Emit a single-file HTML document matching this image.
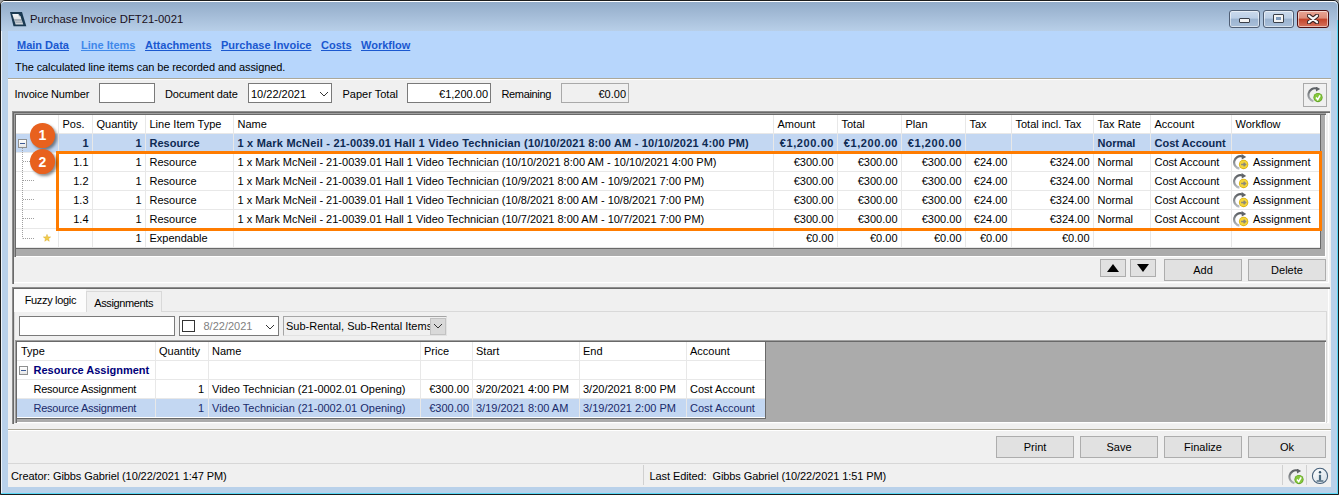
<!DOCTYPE html>
<html><head><meta charset="utf-8">
<style>
*{margin:0;padding:0;box-sizing:border-box}
html,body{width:1339px;height:495px;overflow:hidden;background:#f0f0f0}
body{position:relative;font-family:"Liberation Sans",sans-serif;font-size:11px;color:#000}
.a{position:absolute}
.t{position:absolute;white-space:pre;font-size:11px;line-height:13px}
.b{font-weight:bold}
.wb{position:absolute;top:10px;height:18px;width:31px;border:1px solid #4f5e74;border-radius:3px;background:linear-gradient(#cbdaec 0,#bccfe6 45%,#9bb3d0 50%,#a9bfd9 100%);box-shadow:inset 0 0 0 1px rgba(255,255,255,.55)}
.wb.close{background:linear-gradient(#e8a595 0,#de8c79 45%,#c3432a 50%,#d5735d 100%);border-color:#4e1013}
.box{position:absolute;background:#fff;border:1px solid #7a7a7a}
.btn{position:absolute;background:#e1e1e1;border:1px solid #adadad;text-align:center;line-height:20px;font-size:11px;white-space:pre}
.lnk{text-decoration:underline;color:#1a5ad2}
</style></head><body>
<div class="a" style="left:0px;top:0px;width:1339px;height:495px;background:#a0a0a0"></div>
<div class="a" style="left:0px;top:0px;width:1339px;height:495px;background:#b9d1ea;border:1px solid #1c1c1c;border-radius:5px 5px 0 0"></div>
<div class="a" style="left:1337px;top:20px;width:1px;height:474px;background:#5ad8f6"></div>
<div class="a" style="left:1px;top:493px;width:1337px;height:1px;background:#5ad8f6"></div>
<div class="a" style="left:1px;top:4px;width:1px;height:489px;background:#eef4fa"></div>
<div class="a" style="left:1px;top:1px;width:1336px;height:30px;background:linear-gradient(#93acc9,#b8cfe8);border-radius:4px 4px 0 0;border-top:1px solid #fff"></div>
<svg class="a" style="left:10px;top:12px" width="17" height="15" viewBox="0 0 17 15">
 <defs><linearGradient id="pg" x1="0" y1="0" x2="0" y2="1"><stop offset="0" stop-color="#f4f6f8"/><stop offset=".45" stop-color="#e0e4e8"/><stop offset=".5" stop-color="#aab4bc"/><stop offset="1" stop-color="#d8dde2"/></linearGradient></defs>
 <path d="M0 0 L12 0 L16.3 14.2 L3.5 14.2 Z" fill="#1b3a52"/>
 <path d="M2.2 2 L8.5 2 L10.4 4.2 L13.3 12.5 L5.6 12.5 Z" fill="url(#pg)"/>
 <path d="M8.5 2 L8.9 4.3 L10.4 4.2 Z" fill="#6a8298"/>
 <path d="M4.6 8.2 H11.2 M5.4 10.3 H12.2" stroke="#8e9aa6" stroke-width=".7"/>
</svg>
<div class="t " style="left:30px;top:13.3px;font-size:11.3px;color:#1a1020">Purchase Invoice DFT21-0021</div>
<div class="wb" style="left:1229px"></div><div class="wb" style="left:1263px"></div><div class="wb close" style="left:1297px;width:32px"></div>
<div class="a" style="left:1239px;top:18px;width:11px;height:5px;background:#f4f4f4;border:1px solid #3a3f48;border-radius:1px"></div>
<div class="a" style="left:1273px;top:14px;width:11px;height:9px;background:#f4f4f4;border:1px solid #3a3f48;border-radius:1px"><div class="a" style="left:2px;top:2px;width:5px;height:3px;background:#7f9bbd"></div></div>
<svg class="a" style="left:1306.5px;top:13.5px" width="12" height="10" viewBox="0 0 12 10"><path d="M2 1.8 L10 8.2 M10 1.8 L2 8.2" stroke="#3b2424" stroke-width="4.4" stroke-linecap="round"/><path d="M2 1.8 L10 8.2 M10 1.8 L2 8.2" stroke="#f7f7f7" stroke-width="2.3" stroke-linecap="round"/></svg>
<div class="a" style="left:8px;top:31px;width:1323px;height:456px;background:#f0f0f0"></div>
<div class="a" style="left:8px;top:31px;width:1323px;height:47px;background:#b7d6fc"></div>
<div class="a" style="left:8px;top:78px;width:1323px;height:1px;background:#aca899"></div>
<div class="a" style="left:8px;top:79px;width:1323px;height:1px;background:#fff"></div>
<div class="t b lnk" style="left:17px;top:38.5px;color:#1a58d0">Main Data</div>
<div class="t b lnk" style="left:81px;top:38.5px;color:#3f88ea">Line Items</div>
<div class="t b lnk" style="left:145px;top:38.5px;color:#1a58d0">Attachments</div>
<div class="t b lnk" style="left:221px;top:38.5px;color:#1a58d0">Purchase Invoice</div>
<div class="t b lnk" style="left:321px;top:38.5px;color:#1a58d0">Costs</div>
<div class="t b lnk" style="left:361px;top:38.5px;color:#1a58d0">Workflow</div>
<div class="t " style="left:15px;top:60.9px;letter-spacing:-0.09px">The calculated line items can be recorded and assigned.</div>
<div class="t " style="left:14.5px;top:87.7px;letter-spacing:-0.17px">Invoice Number</div>
<div class="box" style="left:99px;top:83px;width:56px;height:20px"></div>
<div class="t " style="left:165px;top:87.7px;letter-spacing:-0.15px">Document date</div>
<div class="box" style="left:248px;top:83px;width:84px;height:20px"></div>
<div class="t " style="left:251px;top:87.7px;">10/22/2021</div>
<svg class="a" style="left:318.5px;top:91px" width="10" height="6"><path d="M1 1 L5 5 L9 1" stroke="#333" fill="none"/></svg>
<div class="t " style="left:342.5px;top:87.7px;">Paper Total</div>
<div class="box" style="left:407px;top:83px;width:84px;height:20px"></div>
<div class="t " style="left:410px;top:87.7px;width:78px;text-align:right;">€1,200.00</div>
<div class="t " style="left:501.5px;top:87.7px;letter-spacing:-0.35px">Remaining</div>
<div class="box" style="left:561px;top:83px;width:68px;height:20px;background:#f0f0f0;border-color:#a9a9a9"></div>
<div class="t " style="left:564px;top:87.7px;width:62px;text-align:right;">€0.00</div>
<div class="a" style="left:1303px;top:83px;width:24px;height:24px;border:1px solid #a9a9a9;background:#f0f0f0"></div>
<div class="a" style="left:12px;top:111px;width:1318px;height:173px;background:#f0f0f0;box-shadow:inset 1px 1px 0 #8e8e8e,inset 2px 2px 0 #696969,inset -1px -1px 0 #f4f4f4,inset -2px -2px 0 #fff"></div>
<div class="a" style="left:14px;top:113px;width:1312px;height:144px;background:#ababab;box-shadow:inset 1px 1px 0 #a0a0a0,inset 2px 2px 0 #696969,inset -1px -1px 0 #fff"></div>
<div class="a" style="left:16px;top:115px;width:1305px;height:134px;border-right:1px solid #696969;border-bottom:1px solid #696969"></div>
<div class="a" style="left:16px;top:115px;width:1304px;height:133px;background:#fff"></div>
<div class="a" style="left:16px;top:134px;width:1304px;height:18px;background:#c3d7f2"></div>
<div class="a" style="left:16px;top:133px;width:1304px;height:1px;background:#e8e8e8"></div>
<div class="a" style="left:16px;top:152px;width:1304px;height:1px;background:#e8e8e8"></div>
<div class="a" style="left:16px;top:171px;width:1304px;height:1px;background:#e8e8e8"></div>
<div class="a" style="left:16px;top:190px;width:1304px;height:1px;background:#e8e8e8"></div>
<div class="a" style="left:16px;top:209px;width:1304px;height:1px;background:#e8e8e8"></div>
<div class="a" style="left:16px;top:228px;width:1304px;height:1px;background:#e8e8e8"></div>
<div class="a" style="left:16px;top:247px;width:1304px;height:1px;background:#e8e8e8"></div>
<div class="a" style="left:58px;top:115px;width:1px;height:132px;background:#e8e8e8"></div>
<div class="a" style="left:92px;top:115px;width:1px;height:132px;background:#e8e8e8"></div>
<div class="a" style="left:145px;top:115px;width:1px;height:132px;background:#e8e8e8"></div>
<div class="a" style="left:233px;top:115px;width:1px;height:132px;background:#e8e8e8"></div>
<div class="a" style="left:773px;top:115px;width:1px;height:132px;background:#e8e8e8"></div>
<div class="a" style="left:837px;top:115px;width:1px;height:132px;background:#e8e8e8"></div>
<div class="a" style="left:901px;top:115px;width:1px;height:132px;background:#e8e8e8"></div>
<div class="a" style="left:965px;top:115px;width:1px;height:132px;background:#e8e8e8"></div>
<div class="a" style="left:1011px;top:115px;width:1px;height:132px;background:#e8e8e8"></div>
<div class="a" style="left:1093px;top:115px;width:1px;height:132px;background:#e8e8e8"></div>
<div class="a" style="left:1150px;top:115px;width:1px;height:132px;background:#e8e8e8"></div>
<div class="a" style="left:1231px;top:115px;width:1px;height:132px;background:#e8e8e8"></div>
<div class="t " style="left:62.5px;top:117.7px;">Pos.</div>
<div class="t " style="left:96.5px;top:117.7px;">Quantity</div>
<div class="t " style="left:149.5px;top:117.7px;">Line Item Type</div>
<div class="t " style="left:237.5px;top:117.7px;">Name</div>
<div class="t " style="left:777.5px;top:117.7px;">Amount</div>
<div class="t " style="left:841.5px;top:117.7px;">Total</div>
<div class="t " style="left:905.5px;top:117.7px;">Plan</div>
<div class="t " style="left:969.5px;top:117.7px;">Tax</div>
<div class="t " style="left:1015.5px;top:117.7px;">Total incl. Tax</div>
<div class="t " style="left:1097.5px;top:117.7px;">Tax Rate</div>
<div class="t " style="left:1154.5px;top:117.7px;">Account</div>
<div class="t " style="left:1235.5px;top:117.7px;">Workflow</div>
<div class="t b" style="left:58px;top:136.8px;width:30.5px;text-align:right;color:#0e2a52;">1</div>
<div class="t b" style="left:92px;top:136.8px;width:49.5px;text-align:right;color:#0e2a52;">1</div>
<div class="t b" style="left:149.5px;top:136.8px;color:#0e2a52;">Resource</div>
<div class="t b" style="left:237.5px;top:136.8px;color:#0e2a52;letter-spacing:0.2px;">1 x Mark McNeil - 21-0039.01 Hall 1 Video Technician (10/10/2021 8:00 AM - 10/10/2021 4:00 PM)</div>
<div class="t b" style="left:773px;top:136.8px;width:61.1px;text-align:right;color:#0e2a52;letter-spacing:0.6px;">€1,200.00</div>
<div class="t b" style="left:837px;top:136.8px;width:61.1px;text-align:right;color:#0e2a52;letter-spacing:0.6px;">€1,200.00</div>
<div class="t b" style="left:901px;top:136.8px;width:61.1px;text-align:right;color:#0e2a52;letter-spacing:0.6px;">€1,200.00</div>
<div class="t b" style="left:1097.5px;top:136.8px;color:#0e2a52;">Normal</div>
<div class="t b" style="left:1154.5px;top:136.8px;color:#0e2a52;">Cost Account</div>
<div class="t " style="left:58px;top:155.8px;width:30.5px;text-align:right;">1.1</div>
<div class="t " style="left:92px;top:155.8px;width:49.5px;text-align:right;">1</div>
<div class="t " style="left:149.5px;top:155.8px;">Resource</div>
<div class="t " style="left:237.5px;top:155.8px;">1 x Mark McNeil - 21-0039.01 Hall 1 Video Technician (10/10/2021 8:00 AM - 10/10/2021 4:00 PM)</div>
<div class="t " style="left:773px;top:155.8px;width:60.5px;text-align:right;">€300.00</div>
<div class="t " style="left:837px;top:155.8px;width:60.5px;text-align:right;">€300.00</div>
<div class="t " style="left:901px;top:155.8px;width:60.5px;text-align:right;">€300.00</div>
<div class="t " style="left:965px;top:155.8px;width:42.5px;text-align:right;">€24.00</div>
<div class="t " style="left:1011px;top:155.8px;width:78.5px;text-align:right;">€324.00</div>
<div class="t " style="left:1097.5px;top:155.8px;">Normal</div>
<div class="t " style="left:1154.5px;top:155.8px;">Cost Account</div>
<svg class="a" style="left:1233px;top:154px" width="16" height="16" viewBox="0 0 16 16">
<defs><linearGradient id="ag1233154" x1="0" y1="0" x2="0" y2="1"><stop offset="0" stop-color="#5c6064"/><stop offset="1" stop-color="#b8bcc0"/></linearGradient></defs>
<path d="M6.4 14.7 A6.3 6.3 0 1 1 9.4 2.5" stroke="url(#ag1233154)" stroke-width="2.2" fill="none"/>
<path d="M8.6 0 L13.2 2.9 L8.8 5.6 Z" fill="#606468"/>
<circle cx="10.6" cy="10.5" r="4.7" fill="#d8b010"/>
<circle cx="10.6" cy="10.3" r="3.9" fill="#f4d53a"/>
<path d="M8.1 10.5 L12.3 10.5 M10.6 8.7 L12.6 10.5 L10.6 12.3" stroke="#8c8a7a" stroke-width="1.4" fill="none"/>
</svg>
<div class="t " style="left:1253px;top:155.8px;">Assignment</div>
<div class="t " style="left:58px;top:174.8px;width:30.5px;text-align:right;">1.2</div>
<div class="t " style="left:92px;top:174.8px;width:49.5px;text-align:right;">1</div>
<div class="t " style="left:149.5px;top:174.8px;">Resource</div>
<div class="t " style="left:237.5px;top:174.8px;">1 x Mark McNeil - 21-0039.01 Hall 1 Video Technician (10/9/2021 8:00 AM - 10/9/2021 7:00 PM)</div>
<div class="t " style="left:773px;top:174.8px;width:60.5px;text-align:right;">€300.00</div>
<div class="t " style="left:837px;top:174.8px;width:60.5px;text-align:right;">€300.00</div>
<div class="t " style="left:901px;top:174.8px;width:60.5px;text-align:right;">€300.00</div>
<div class="t " style="left:965px;top:174.8px;width:42.5px;text-align:right;">€24.00</div>
<div class="t " style="left:1011px;top:174.8px;width:78.5px;text-align:right;">€324.00</div>
<div class="t " style="left:1097.5px;top:174.8px;">Normal</div>
<div class="t " style="left:1154.5px;top:174.8px;">Cost Account</div>
<svg class="a" style="left:1233px;top:173px" width="16" height="16" viewBox="0 0 16 16">
<defs><linearGradient id="ag1233173" x1="0" y1="0" x2="0" y2="1"><stop offset="0" stop-color="#5c6064"/><stop offset="1" stop-color="#b8bcc0"/></linearGradient></defs>
<path d="M6.4 14.7 A6.3 6.3 0 1 1 9.4 2.5" stroke="url(#ag1233173)" stroke-width="2.2" fill="none"/>
<path d="M8.6 0 L13.2 2.9 L8.8 5.6 Z" fill="#606468"/>
<circle cx="10.6" cy="10.5" r="4.7" fill="#d8b010"/>
<circle cx="10.6" cy="10.3" r="3.9" fill="#f4d53a"/>
<path d="M8.1 10.5 L12.3 10.5 M10.6 8.7 L12.6 10.5 L10.6 12.3" stroke="#8c8a7a" stroke-width="1.4" fill="none"/>
</svg>
<div class="t " style="left:1253px;top:174.8px;">Assignment</div>
<div class="t " style="left:58px;top:193.8px;width:30.5px;text-align:right;">1.3</div>
<div class="t " style="left:92px;top:193.8px;width:49.5px;text-align:right;">1</div>
<div class="t " style="left:149.5px;top:193.8px;">Resource</div>
<div class="t " style="left:237.5px;top:193.8px;">1 x Mark McNeil - 21-0039.01 Hall 1 Video Technician (10/8/2021 8:00 AM - 10/8/2021 7:00 PM)</div>
<div class="t " style="left:773px;top:193.8px;width:60.5px;text-align:right;">€300.00</div>
<div class="t " style="left:837px;top:193.8px;width:60.5px;text-align:right;">€300.00</div>
<div class="t " style="left:901px;top:193.8px;width:60.5px;text-align:right;">€300.00</div>
<div class="t " style="left:965px;top:193.8px;width:42.5px;text-align:right;">€24.00</div>
<div class="t " style="left:1011px;top:193.8px;width:78.5px;text-align:right;">€324.00</div>
<div class="t " style="left:1097.5px;top:193.8px;">Normal</div>
<div class="t " style="left:1154.5px;top:193.8px;">Cost Account</div>
<svg class="a" style="left:1233px;top:192px" width="16" height="16" viewBox="0 0 16 16">
<defs><linearGradient id="ag1233192" x1="0" y1="0" x2="0" y2="1"><stop offset="0" stop-color="#5c6064"/><stop offset="1" stop-color="#b8bcc0"/></linearGradient></defs>
<path d="M6.4 14.7 A6.3 6.3 0 1 1 9.4 2.5" stroke="url(#ag1233192)" stroke-width="2.2" fill="none"/>
<path d="M8.6 0 L13.2 2.9 L8.8 5.6 Z" fill="#606468"/>
<circle cx="10.6" cy="10.5" r="4.7" fill="#d8b010"/>
<circle cx="10.6" cy="10.3" r="3.9" fill="#f4d53a"/>
<path d="M8.1 10.5 L12.3 10.5 M10.6 8.7 L12.6 10.5 L10.6 12.3" stroke="#8c8a7a" stroke-width="1.4" fill="none"/>
</svg>
<div class="t " style="left:1253px;top:193.8px;">Assignment</div>
<div class="t " style="left:58px;top:212.8px;width:30.5px;text-align:right;">1.4</div>
<div class="t " style="left:92px;top:212.8px;width:49.5px;text-align:right;">1</div>
<div class="t " style="left:149.5px;top:212.8px;">Resource</div>
<div class="t " style="left:237.5px;top:212.8px;">1 x Mark McNeil - 21-0039.01 Hall 1 Video Technician (10/7/2021 8:00 AM - 10/7/2021 7:00 PM)</div>
<div class="t " style="left:773px;top:212.8px;width:60.5px;text-align:right;">€300.00</div>
<div class="t " style="left:837px;top:212.8px;width:60.5px;text-align:right;">€300.00</div>
<div class="t " style="left:901px;top:212.8px;width:60.5px;text-align:right;">€300.00</div>
<div class="t " style="left:965px;top:212.8px;width:42.5px;text-align:right;">€24.00</div>
<div class="t " style="left:1011px;top:212.8px;width:78.5px;text-align:right;">€324.00</div>
<div class="t " style="left:1097.5px;top:212.8px;">Normal</div>
<div class="t " style="left:1154.5px;top:212.8px;">Cost Account</div>
<svg class="a" style="left:1233px;top:211px" width="16" height="16" viewBox="0 0 16 16">
<defs><linearGradient id="ag1233211" x1="0" y1="0" x2="0" y2="1"><stop offset="0" stop-color="#5c6064"/><stop offset="1" stop-color="#b8bcc0"/></linearGradient></defs>
<path d="M6.4 14.7 A6.3 6.3 0 1 1 9.4 2.5" stroke="url(#ag1233211)" stroke-width="2.2" fill="none"/>
<path d="M8.6 0 L13.2 2.9 L8.8 5.6 Z" fill="#606468"/>
<circle cx="10.6" cy="10.5" r="4.7" fill="#d8b010"/>
<circle cx="10.6" cy="10.3" r="3.9" fill="#f4d53a"/>
<path d="M8.1 10.5 L12.3 10.5 M10.6 8.7 L12.6 10.5 L10.6 12.3" stroke="#8c8a7a" stroke-width="1.4" fill="none"/>
</svg>
<div class="t " style="left:1253px;top:212.8px;">Assignment</div>
<div class="t " style="left:92px;top:231.8px;width:49.5px;text-align:right;">1</div>
<div class="t " style="left:149.5px;top:231.8px;">Expendable</div>
<div class="t " style="left:773px;top:231.8px;width:60.5px;text-align:right;">€0.00</div>
<div class="t " style="left:837px;top:231.8px;width:60.5px;text-align:right;">€0.00</div>
<div class="t " style="left:901px;top:231.8px;width:60.5px;text-align:right;">€0.00</div>
<div class="t " style="left:965px;top:231.8px;width:42.5px;text-align:right;">€0.00</div>
<div class="t " style="left:1011px;top:231.8px;width:78.5px;text-align:right;">€0.00</div>
<svg class="a" style="left:16px;top:133px" width="42" height="114"><g stroke="#a0a0a0" stroke-dasharray="1 1" fill="none"><path d="M6.5 15 V105.5"/><path d="M7 28.5 H18 M7 47.5 H18 M7 66.5 H18 M7 85.5 H18 M7 105.5 H18"/></g></svg>
<div class="a" style="left:18px;top:139px;width:9px;height:9px;border:1px solid #8e8f8f;background:linear-gradient(#fff,#e6e6e6)"></div>
<div class="a" style="left:20px;top:143px;width:5px;height:1px;background:#3c5a96"></div>
<svg class="a" style="left:43px;top:234px" width="8" height="8" viewBox="0 0 10 10"><path d="M5 .5 L6.2 3.6 L9.5 3.7 L6.9 5.8 L7.8 9 L5 7.2 L2.2 9 L3.1 5.8 L.5 3.7 L3.8 3.6 Z" fill="#f2cc48" stroke="#d9aa2a" stroke-width=".6"/></svg>
<div class="a" style="left:56px;top:151px;width:1266px;height:80px;border:3px solid #ff7c00"></div>
<div class="a" style="left:30.1px;top:123.1px;width:24.6px;height:24.6px;border-radius:50%;background:#e8611e;box-shadow:2px 2px 3px rgba(0,0,0,.45)"></div>
<div class="t b" style="left:30px;top:127.4px;width:24.6px;text-align:center;font-size:14px;line-height:16px;color:#fff">1</div>
<div class="a" style="left:30.1px;top:149.2px;width:24.6px;height:24.6px;border-radius:50%;background:#e8611e;box-shadow:2px 2px 3px rgba(0,0,0,.45)"></div>
<div class="t b" style="left:30px;top:153.5px;width:24.6px;text-align:center;font-size:14px;line-height:16px;color:#fff">2</div>
<div class="a" style="left:1100px;top:259px;width:26px;height:18px;background:#e1e1e1;border:1px solid #adadad"></div>
<div class="a" style="left:1130px;top:259px;width:26px;height:18px;background:#e1e1e1;border:1px solid #adadad"></div>
<svg class="a" style="left:1106px;top:263px" width="14" height="10"><path d="M7 1 L13 9 L1 9 Z" fill="#000"/></svg>
<svg class="a" style="left:1136px;top:263px" width="14" height="10"><path d="M1 1 L13 1 L7 9 Z" fill="#000"/></svg>
<div class="btn" style="left:1164px;top:259px;width:78px;height:22px">Add</div>
<div class="btn" style="left:1248px;top:259px;width:78px;height:22px">Delete</div>
<div class="a" style="left:12px;top:287px;width:1318px;height:137px;background:#f0f0f0;box-shadow:inset 1px 1px 0 #8e8e8e,inset 2px 2px 0 #696969,inset -1px -1px 0 #f4f4f4,inset -2px -2px 0 #fff"></div>
<div class="a" style="left:14px;top:311px;width:1313px;height:112px;border:1px solid #d9d9d9"></div>
<div class="a" style="left:86px;top:291px;width:76px;height:21px;background:#f0f0f0;border:1px solid #d9d9d9;border-bottom:none"></div>
<div class="a" style="left:14px;top:289px;width:72px;height:23px;background:#fcfcfc"></div>
<div class="t " style="left:24.7px;top:294.0px;letter-spacing:-0.33px">Fuzzy logic</div>
<div class="t " style="left:94.2px;top:296.6px;letter-spacing:-0.36px">Assignments</div>
<div class="box" style="left:19px;top:316px;width:156px;height:20px"></div>
<div class="box" style="left:179px;top:316px;width:100px;height:20px"></div>
<div class="a" style="left:182px;top:320px;width:13px;height:12px;border:1px solid #333;background:#fff"></div>
<div class="t " style="left:203.5px;top:320.0px;color:#7f7f7f">8/22/2021</div>
<svg class="a" style="left:265px;top:323.5px" width="10" height="6"><path d="M1 1 L5 5 L9 1" stroke="#333" fill="none"/></svg>
<div class="a" style="left:283px;top:316px;width:164px;height:20px;border:1px solid;border-color:#a5a5a5 #e2e2e2 #e2e2e2 #a5a5a5;background:#f0f0f0"></div>
<div class="t " style="left:286px;top:320.0px;">Sub-Rental, Sub-Rental Items</div>
<div class="a" style="left:430px;top:318px;width:16px;height:17px;background:#d9d9d9;border:1px solid #c2c2c2"></div>
<svg class="a" style="left:433px;top:323px" width="10" height="6"><path d="M1 1 L5 5 L9 1" stroke="#333" fill="none"/></svg>
<div class="a" style="left:15px;top:340px;width:1311px;height:83px;background:#ababab;box-shadow:inset 1px 1px 0 #a0a0a0,inset 2px 2px 0 #696969,inset -1px -1px 0 #fff"></div>
<div class="a" style="left:17px;top:342px;width:749px;height:77px;background:#fff;border-right:1px solid #696969;border-bottom:1px solid #696969"></div>
<div class="a" style="left:17px;top:399px;width:748px;height:18px;background:#c3d7f2"></div>
<div class="a" style="left:17px;top:360px;width:748px;height:1px;background:#e8e8e8"></div>
<div class="a" style="left:17px;top:379px;width:748px;height:1px;background:#e8e8e8"></div>
<div class="a" style="left:17px;top:398px;width:748px;height:1px;background:#e8e8e8"></div>
<div class="a" style="left:155px;top:342px;width:1px;height:75px;background:#e8e8e8"></div>
<div class="a" style="left:208px;top:342px;width:1px;height:75px;background:#e8e8e8"></div>
<div class="a" style="left:420px;top:342px;width:1px;height:75px;background:#e8e8e8"></div>
<div class="a" style="left:472px;top:342px;width:1px;height:75px;background:#e8e8e8"></div>
<div class="a" style="left:579px;top:342px;width:1px;height:75px;background:#e8e8e8"></div>
<div class="a" style="left:686px;top:342px;width:1px;height:75px;background:#e8e8e8"></div>
<div class="t " style="left:21px;top:344.7px;">Type</div>
<div class="t " style="left:159px;top:344.7px;">Quantity</div>
<div class="t " style="left:212px;top:344.7px;">Name</div>
<div class="t " style="left:424px;top:344.7px;">Price</div>
<div class="t " style="left:476px;top:344.7px;">Start</div>
<div class="t " style="left:583px;top:344.7px;">End</div>
<div class="t " style="left:690px;top:344.7px;">Account</div>
<div class="a" style="left:19px;top:366px;width:9px;height:9px;border:1px solid #8e8f8f;background:linear-gradient(#fff,#e6e6e6)"></div>
<div class="a" style="left:21px;top:370px;width:5px;height:1px;background:#3c5a96"></div>
<div class="t b" style="left:33.5px;top:364.2px;color:#00007a">Resource Assignment</div>
<div class="t " style="left:33.5px;top:382.8px;;letter-spacing:-0.23px">Resource Assignment</div>
<div class="t " style="left:155px;top:382.8px;width:49px;text-align:right;">1</div>
<div class="t " style="left:212px;top:382.8px;">Video Technician (21-0002.01 Opening)</div>
<div class="t " style="left:420px;top:382.8px;width:49px;text-align:right;">€300.00</div>
<div class="t " style="left:476px;top:382.8px;">3/20/2021 4:00 PM</div>
<div class="t " style="left:583px;top:382.8px;">3/20/2021 8:00 PM</div>
<div class="t " style="left:690px;top:382.8px;">Cost Account</div>
<div class="t " style="left:33.5px;top:401.8px;color:#1a2a6a;letter-spacing:-0.23px">Resource Assignment</div>
<div class="t " style="left:155px;top:401.8px;width:49px;text-align:right;color:#1a2a6a">1</div>
<div class="t " style="left:212px;top:401.8px;color:#1a2a6a">Video Technician (21-0002.01 Opening)</div>
<div class="t " style="left:420px;top:401.8px;width:49px;text-align:right;color:#1a2a6a">€300.00</div>
<div class="t " style="left:476px;top:401.8px;color:#1a2a6a">3/19/2021 8:00 AM</div>
<div class="t " style="left:583px;top:401.8px;color:#1a2a6a">3/19/2021 2:00 PM</div>
<div class="t " style="left:690px;top:401.8px;color:#1a2a6a">Cost Account</div>
<div class="a" style="left:8px;top:429px;width:1323px;height:1px;background:#aca899"></div>
<div class="a" style="left:8px;top:430px;width:1323px;height:1px;background:#fff"></div>
<div class="btn" style="left:996px;top:436px;width:78px;height:22px">Print</div>
<div class="btn" style="left:1080px;top:436px;width:78px;height:22px">Save</div>
<div class="btn" style="left:1164px;top:436px;width:78px;height:22px">Finalize</div>
<div class="btn" style="left:1248px;top:436px;width:78px;height:22px">Ok</div>
<div class="a" style="left:8px;top:463px;width:1323px;height:1px;background:#d7d7d7"></div>
<div class="t " style="left:11px;top:469.7px;letter-spacing:-0.09px">Creator: Gibbs Gabriel (10/22/2021 1:47 PM)</div>
<div class="a" style="left:643px;top:465px;width:1px;height:20px;background:#d0d0d0"></div>
<div class="t " style="left:649.5px;top:469.7px;letter-spacing:-0.09px">Last Edited:  Gibbs Gabriel (10/22/2021 1:51 PM)</div>
<div class="a" style="left:1282px;top:465px;width:1px;height:20px;background:#d0d0d0"></div>
<div class="a" style="left:1306px;top:465px;width:1px;height:20px;background:#d0d0d0"></div>
<svg class="a" style="left:1307px;top:87px" width="16" height="16" viewBox="0 0 16 16">
<defs><linearGradient id="rg1307" x1="0" y1="0" x2="0" y2="1"><stop offset="0" stop-color="#5c6064"/><stop offset="1" stop-color="#b0b4b8"/></linearGradient></defs>
<path d="M6.4 14.2 A6.2 6.2 0 1 1 9.6 1.5" stroke="url(#rg1307)" stroke-width="2.1" fill="none"/>
<path d="M8.8 -0.6 L13.2 2 L9 4.6 Z" fill="#5f6367"/>
<circle cx="11" cy="10.6" r="4.6" fill="#5d9e22"/>
<circle cx="11" cy="10.4" r="3.8" fill="#86c83c"/>
<path d="M9 10.6 L10.7 12.6 L13.1 8.4" stroke="#fff" stroke-width="1.6" fill="none"/>
</svg>
<svg class="a" style="left:1288px;top:468.5px" width="16" height="16" viewBox="0 0 16 16">
<defs><linearGradient id="rg1288" x1="0" y1="0" x2="0" y2="1"><stop offset="0" stop-color="#5c6064"/><stop offset="1" stop-color="#b0b4b8"/></linearGradient></defs>
<path d="M6.4 14.2 A6.2 6.2 0 1 1 9.6 1.5" stroke="url(#rg1288)" stroke-width="2.1" fill="none"/>
<path d="M8.8 -0.6 L13.2 2 L9 4.6 Z" fill="#5f6367"/>
<circle cx="11" cy="10.6" r="4.6" fill="#5d9e22"/>
<circle cx="11" cy="10.4" r="3.8" fill="#86c83c"/>
<path d="M9 10.6 L10.7 12.6 L13.1 8.4" stroke="#fff" stroke-width="1.6" fill="none"/>
</svg>
<svg class="a" style="left:1311px;top:467px" width="18" height="18" viewBox="0 0 18 18">
<defs><linearGradient id="ig" x1="0" y1="0" x2="1" y2="1"><stop offset="0" stop-color="#ffffff"/><stop offset="1" stop-color="#d5dee6"/></linearGradient></defs>
<circle cx="9" cy="8.9" r="7.6" fill="url(#ig)" stroke="#46607a" stroke-width="1.1"/>
<circle cx="9" cy="5.3" r="1.2" fill="#2f4f66"/>
<path d="M7.9 7.8 H10.1 V13.3 H7.9 Z" fill="#4a6a80"/>
<path d="M5.6 13.4 H12.4 V14.6 H5.6 Z" fill="#2f4f66"/>
</svg>
</body></html>
